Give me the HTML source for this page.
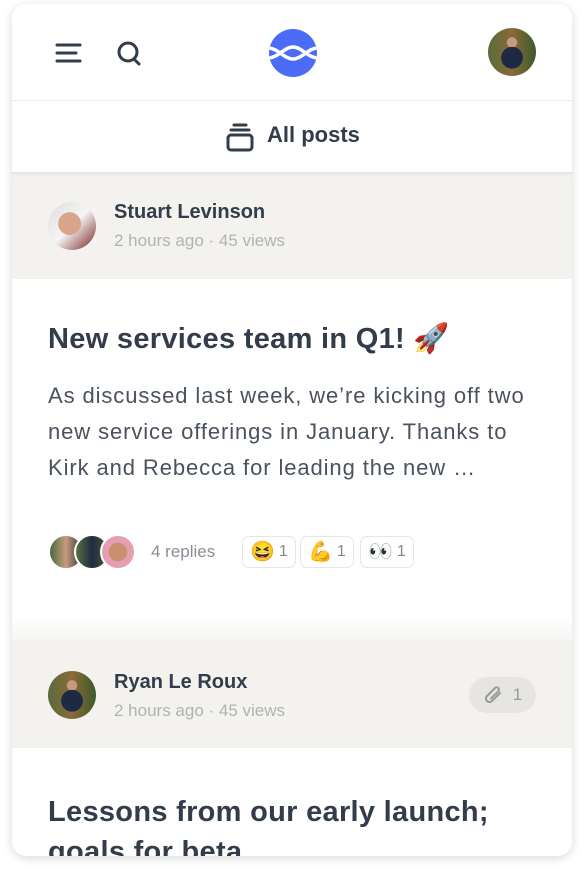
<!DOCTYPE html>
<html><head><style>
*{box-sizing:border-box;margin:0;padding:0}
body{width:584px;height:876px;background:#fff;font-family:"Liberation Sans",sans-serif;color:#323c4a;position:relative;overflow:hidden}
.card{position:absolute;left:12px;top:4px;width:560px;height:852px;border-radius:14px;overflow:hidden;background:#fff;box-shadow:0 2px 10px rgba(0,0,0,.15)}
.abs{position:absolute}
.av{position:absolute;border-radius:50%;overflow:hidden}
.gray{background:#f3f2ef}
.name{font-size:20px;font-weight:bold;color:#323c4a}
.meta{font-size:17px;color:#b0b2b5}
.title{font-size:29px;font-weight:bold;color:#323c4a;letter-spacing:0.3px}
.pill{position:absolute;top:532px;height:32px;border:1.5px solid #e6e6e6;border-radius:7px;font-size:16px;color:#888;display:flex;align-items:center;padding:0 7px;gap:4px}
.pill .e{font-size:20px;line-height:1}
</style></head><body>
<div class="card">
 <svg class="abs" style="left:42px;top:36px" width="30" height="26"><g stroke="#323c4a" stroke-width="3" stroke-linecap="round"><line x1="3" y1="5" x2="26" y2="5"/><line x1="3" y1="13" x2="22" y2="13"/><line x1="3" y1="21" x2="26" y2="21"/></g></svg>
 <svg class="abs" style="left:104px;top:36px" width="30" height="30"><circle cx="12" cy="12" r="9" fill="none" stroke="#323c4a" stroke-width="3"/><line x1="18" y1="19" x2="23" y2="24" stroke="#323c4a" stroke-width="3" stroke-linecap="round"/></svg>
 <svg class="abs" style="left:256px;top:24px" width="50" height="50"><defs><clipPath id="c"><circle cx="25" cy="25" r="24"/></clipPath></defs><circle cx="25" cy="25" r="24" fill="#4a6cf7"/><g clip-path="url(#c)"><path d="M0 20 C10 20 16 31 25 31 C34 31 40 20 50 20 M0 30 C10 30 16 19 25 19 C34 19 40 30 50 30" fill="none" stroke="#fff" stroke-width="3.5"/></g></svg>
 <div class="av" style="left:476px;top:24px;width:48px;height:48px;background:radial-gradient(circle at 50% 62%,#1e2a44 0 28%,transparent 29%),radial-gradient(circle at 50% 30%,#c89a80 0 12%,transparent 13%),linear-gradient(90deg,#5a6b3a,#8a6a3a,#3d5a2a)"></div>
 <div class="abs" style="left:0;top:96px;width:560px;height:1px;background:#ebebeb"></div>
 <svg class="abs" style="left:214px;top:118px" width="28" height="30"><g fill="none" stroke="#323c4a" stroke-width="3" stroke-linecap="round"><line x1="8" y1="3" x2="20" y2="3"/><line x1="5" y1="8" x2="23" y2="8"/><rect x="2" y="13" width="24" height="15" rx="3"/></g></svg>
 <div class="abs" style="left:255px;top:118px;font-size:22px;font-weight:bold">All posts</div>
 <div class="abs gray" style="left:0;top:168px;width:560px;height:107px;box-shadow:inset 0 4px 4px -2px rgba(0,0,0,.08)"></div>
 <div class="av" style="left:36px;top:198px;width:48px;height:48px;background:radial-gradient(circle at 45% 45%,#d9a58a 0 30%,transparent 31%),linear-gradient(135deg,#ddd,#f5f5f5 50%,#7a2020)"></div>
 <div class="abs name" style="left:102px;top:197px">Stuart Levinson</div>
 <div class="abs meta" style="left:102px;top:227px">2 hours ago · 45 views</div>
 <div class="abs title" style="left:36px;top:318px">New services team in Q1! 🚀</div>
 <div class="abs" style="left:36px;top:374px;width:520px;font-size:22px;line-height:36px;color:#4a525d;letter-spacing:0.9px;white-space:nowrap">As discussed last week, we’re kicking off two<br>new service offerings in January. Thanks to<br>Kirk and Rebecca for leading the new …</div>
 <div class="av" style="left:36px;top:530px;width:36px;height:36px;border:2px solid #fff;background:linear-gradient(90deg,#4a6a40,#c89a80,#333)"></div>
 <div class="av" style="left:62px;top:530px;width:36px;height:36px;border:2px solid #fff;background:linear-gradient(90deg,#5a7040,#1e2a44,#4a5a30)"></div>
 <div class="av" style="left:88px;top:530px;width:36px;height:36px;border:2px solid #fff;background:radial-gradient(circle,#c89070 0 40%,#e4a0b0 42%)"></div>
 <div class="abs" style="left:139px;top:538px;font-size:17px;color:#8a8e94">4 replies</div>
 <div class="pill" style="left:230px"><span class="e">😆</span><span>1</span></div>
 <div class="pill" style="left:288px"><span class="e">💪</span><span>1</span></div>
 <div class="pill" style="left:348px"><span class="e">👀</span><span>1</span></div>
 <div class="abs" style="left:0;top:614px;width:560px;height:24px;background:linear-gradient(#fff,#f5f4f1)"></div>
 <div class="abs gray" style="left:0;top:637px;width:560px;height:107px"></div>
 <div class="av" style="left:36px;top:667px;width:48px;height:48px;background:radial-gradient(circle at 50% 62%,#1e2a44 0 28%,transparent 29%),radial-gradient(circle at 50% 30%,#c89a80 0 12%,transparent 13%),linear-gradient(90deg,#5a6b3a,#8a6a3a,#3d5a2a)"></div>
 <div class="abs name" style="left:102px;top:667px">Ryan Le Roux</div>
 <div class="abs meta" style="left:102px;top:697px">2 hours ago · 45 views</div>
 <div class="abs" style="left:457px;top:673px;width:67px;height:36px;border-radius:18px;background:#e6e5e2;display:flex;align-items:center;justify-content:center;gap:8px;color:#999;font-size:17px"><svg width="22" height="22"><path d="M17 9 L9 17 a3.5 3.5 0 0 1 -5 -5 L12 4 a2.3 2.3 0 0 1 3.3 3.3 L8 14.5" fill="none" stroke="#999" stroke-width="2" stroke-linecap="round"/></svg>1</div>
 <div class="abs title" style="left:36px;top:788px;line-height:40px;width:520px">Lessons from our early launch; goals for beta</div>
</div>
</body></html>
